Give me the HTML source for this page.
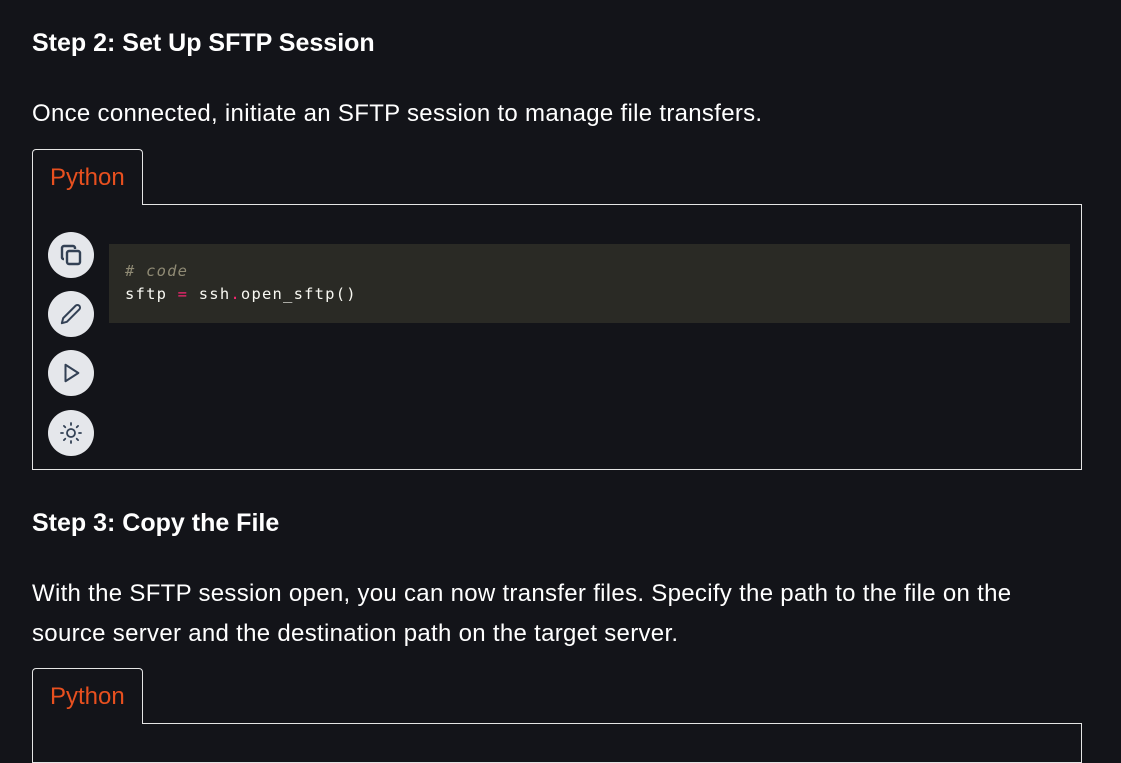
<!DOCTYPE html>
<html><head><style>
body{margin:0;background:#131419;color:#fff;font-family:"Liberation Sans",sans-serif;width:1121px;height:742px;overflow:hidden;position:relative}
h2{position:absolute;margin:0;font-size:25px;font-weight:bold;left:32px;white-space:nowrap}
p{position:absolute;margin:0;left:32px;font-size:24px;letter-spacing:0.3px;word-spacing:0px;line-height:40px;white-space:nowrap}
.tab{position:absolute;left:32px;width:111px;height:56px;border:1px solid #e5e5e5;border-bottom:none;border-radius:4px 4px 0 0;background:#131419;color:#e8501f;font-size:24px;box-sizing:border-box;padding-top:14px;padding-left:17px;z-index:2}
.box{position:absolute;left:32px;width:1050px;border:1px solid #e5e5e5;box-sizing:border-box}
.btn{position:absolute;left:48px;width:46px;height:46px;border-radius:50%;background:#e5e7eb;display:flex;align-items:center;justify-content:center}
.code{position:absolute;left:109px;top:244px;width:961px;height:79px;background:#2a2a25;font-family:"DejaVu Sans Mono","Liberation Mono",monospace;font-size:15.5px;letter-spacing:1.2px;line-height:23px;padding:16px 16px;box-sizing:border-box;color:#f8f8f2}
</style></head><body>
<h2 style="top:29px">Step 2: Set Up SFTP Session</h2>
<p style="top:94px">Once connected, initiate an SFTP session to manage file transfers.</p>
<div class="tab" style="top:149px">Python</div>
<div class="box" style="top:204px;height:266px"></div>
<div class="btn" style="top:232px"><svg width="24" height="24" viewBox="0 0 24 24" fill="none" stroke="#334155" stroke-width="2.4" stroke-linejoin="round"><rect x="8" y="8" width="13" height="13" rx="2"/><path d="M5 16H4a2 2 0 0 1-1-2V5a2 2 0 0 1 2-2h9a2 2 0 0 1 2 2v1"/></svg></div>
<div class="btn" style="top:291px"><svg width="22" height="22" viewBox="0 0 24 24" fill="none" stroke="#334155" stroke-width="2.2" stroke-linejoin="round"><path d="M17 3a2.8 2.8 0 0 1 4 4L7.5 20.5 2 22l1.5-5.5Z"/></svg></div>
<div class="btn" style="top:350px"><svg width="22" height="22" viewBox="0 0 24 24" fill="none" stroke="#334155" stroke-width="2.2" stroke-linejoin="round"><path d="M6 3l14 9-14 9z"/></svg></div>
<div class="btn" style="top:410px"><svg width="24" height="24" viewBox="0 0 24 24" fill="none" stroke="#334155" stroke-width="1.8" stroke-linecap="round"><circle cx="12" cy="12" r="4"/><path d="M12 2v2M12 20v2M4.9 4.9l1.4 1.4M17.7 17.7l1.4 1.4M2 12h2M20 12h2M6.3 17.7l-1.4 1.4M19.1 4.9l-1.4 1.4"/></svg></div>
<div class="code"><div style="color:#8f8a74;font-style:italic"># code</div><div>sftp <span style="color:#f92672">=</span> ssh<span style="color:#f92672">.</span>open_sftp()</div></div>
<h2 style="top:509px">Step 3: Copy the File</h2>
<p style="top:574px">With the SFTP session open, you can now transfer files. Specify the path to the file on the<br>source server and the destination path on the target server.</p>
<div class="tab" style="top:668px">Python</div>
<div class="box" style="top:723px;height:40px"></div>
</body></html>
